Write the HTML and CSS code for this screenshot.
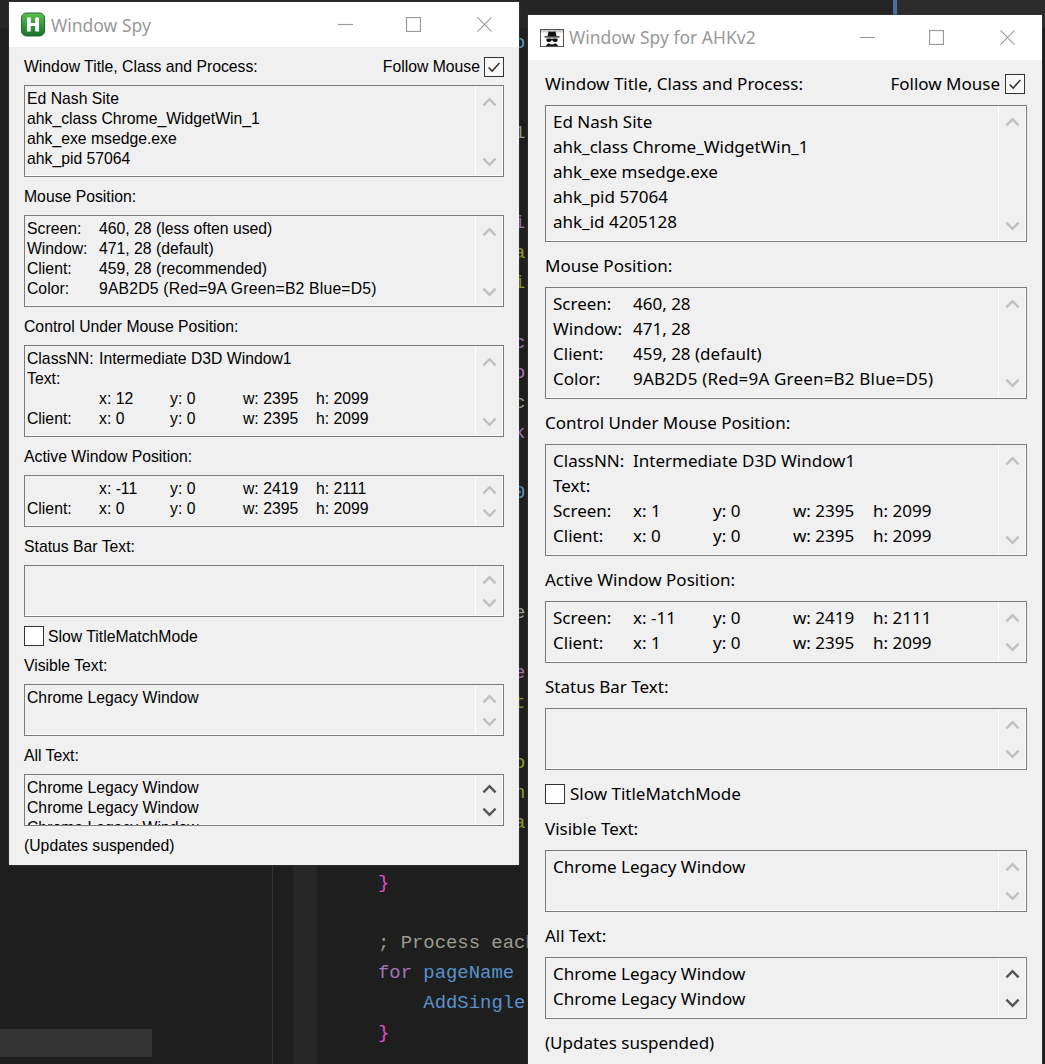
FILE: index.html
```html
<!DOCTYPE html>
<html lang="en">
<head>
<meta charset="UTF-8">
<meta name="viewport" content="width=device-width, initial-scale=1.0">
<title>Window Spy</title>
<link rel="stylesheet" href="styles.css">
</head>
<body>
    <svg class="defs" width="0" height="0">
        <symbol id="chev-up" viewBox="0 0 16 10"><path d="M1.500 8.500 8 2l6.500 6.500" fill="none" stroke="currentColor" stroke-width="2.600"/></symbol>
        <symbol id="chev-down" viewBox="0 0 16 10"><path d="M1.500 1.500 8 8l6.500-6.500" fill="none" stroke="currentColor" stroke-width="2.600"/></symbol>
        <symbol id="tick" viewBox="0 0 20 20"><path d="M4 10.500 8 14.500 16 5.500" fill="none" stroke="#333" stroke-width="1.700"/></symbol>
        <symbol id="min" viewBox="0 0 16 16"><path d="M0 8h16" stroke="#999" stroke-width="1.200"/></symbol>
        <symbol id="max" viewBox="0 0 16 16"><rect x=".6" y=".6" width="14.800" height="14.800" fill="none" stroke="#999" stroke-width="1.200"/></symbol>
        <symbol id="close" viewBox="0 0 16 16"><path d="M.5.5l15 15M15.500.5l-15 15" stroke="#999" stroke-width="1.100"/></symbol>
    </svg>

    <div class="tabs"><div class="tabs-left"></div><div class="tabs-accent"></div><div class="tabs-right"></div></div>

    <div class="editor">
        <div class="sidebar"><div class="sidebar-row"></div></div>
        <div class="gutter"></div>
        <div class="indent"></div>
<pre class="code">            <span class="fn">o</span>


            <span class="cmt">1</span><span class="fn">(</span>


            <span class="kw">i</span>
            <span class="str">a</span><span class="ok">,</span>
            <span class="str">i</span><span class="ok">(</span>

            <span class="kw">c</span>
            <span class="kw">o</span>
            <span class="cmt">c</span>
            <span class="kw">k</span>

            <span class="fn">0</span>



            <span class="cmt">e</span>

            <span class="kw">e</span>
            <span class="str">t</span><span class="ok">(</span>

            <span class="str">o</span>
            <span class="str">n</span>
            <span class="str">a</span><span class="ok">,</span>

<span class="br">}</span>

<span class="cmt">; Process each</span>
<span class="kw">for</span> <span class="fn">pageName</span>
    <span class="fn">AddSingle</span>
<span class="br">}</span></pre>
    </div>

    <!-- old spy -->
    <div class="window win-old">
        <div class="titlebar">
            <svg class="app-icon" viewBox="0 0 24 24">
                <defs><linearGradient id="green" x1="0" y1="0" x2="0" y2="1"><stop offset="0" stop-color="#5fbf4f"/><stop offset=".55" stop-color="#2f9a3c"/><stop offset="1" stop-color="#1a6e2c"/></linearGradient></defs>
                <rect x=".5" y=".5" width="23" height="23" rx="5" fill="url(#green)" stroke="#1f6b2a"/>
                <path d="M6 5h3.800v5.400h4.400V5H18v14h-3.800v-5.400H9.800V19H6z" fill="#fff"/>
            </svg>
            <span class="title">Window Spy</span>
            <div class="caption">
                <svg class="cap-btn"><use href="#min"/></svg>
                <svg class="cap-btn"><use href="#max"/></svg>
                <svg class="cap-btn"><use href="#close"/></svg>
            </div>
        </div>
        <div class="body">
            <div class="head-row">
                <span>Window Title, Class and Process:</span>
                <label class="check">Follow Mouse <span class="box-check"><svg><use href="#tick"/></svg></span></label>
            </div>
            <div class="box h-big">
                <div class="lines">
                    <div>Ed Nash Site</div>
                    <div>ahk_class Chrome_WidgetWin_1</div>
                    <div>ahk_exe msedge.exe</div>
                    <div>ahk_pid 57064</div>
                </div>
                <div class="scroll"><svg><use href="#chev-up"/></svg><svg><use href="#chev-down"/></svg></div>
            </div>

            <div class="label">Mouse Position:</div>
            <div class="box h-big">
                <div class="lines">
                    <div class="row"><span>Screen:</span><span class="wide">460, 28 (less often used)</span></div>
                    <div class="row"><span>Window:</span><span class="wide">471, 28 (default)</span></div>
                    <div class="row"><span>Client:</span><span class="wide">459, 28 (recommended)</span></div>
                    <div class="row"><span>Color:</span><span class="wide color">9AB2D5 (Red=9A Green=B2 Blue=D5)</span></div>
                </div>
                <div class="scroll"><svg><use href="#chev-up"/></svg><svg><use href="#chev-down"/></svg></div>
            </div>

            <div class="label">Control Under Mouse Position:</div>
            <div class="box h-big">
                <div class="lines">
                    <div class="row"><span>ClassNN:</span><span class="wide">Intermediate D3D Window1</span></div>
                    <div class="row"><span>Text:</span></div>
                    <div class="row"><span></span><span>x: 12</span><span>y: 0</span><span>w: 2395</span><span>h: 2099</span></div>
                    <div class="row"><span>Client:</span><span>x: 0</span><span>y: 0</span><span>w: 2395</span><span>h: 2099</span></div>
                </div>
                <div class="scroll"><svg><use href="#chev-up"/></svg><svg><use href="#chev-down"/></svg></div>
            </div>

            <div class="label">Active Window Position:</div>
            <div class="box h-small">
                <div class="lines">
                    <div class="row"><span></span><span>x: -11</span><span>y: 0</span><span>w: 2419</span><span>h: 2111</span></div>
                    <div class="row"><span>Client:</span><span>x: 0</span><span>y: 0</span><span>w: 2395</span><span>h: 2099</span></div>
                </div>
                <div class="scroll"><svg><use href="#chev-up"/></svg><svg><use href="#chev-down"/></svg></div>
            </div>

            <div class="label">Status Bar Text:</div>
            <div class="box h-small">
                <div class="lines"></div>
                <div class="scroll"><svg><use href="#chev-up"/></svg><svg><use href="#chev-down"/></svg></div>
            </div>

            <label class="check slow"><span class="box-check blank"></span> Slow TitleMatchMode</label>

            <div class="label">Visible Text:</div>
            <div class="box h-small">
                <div class="lines"><div>Chrome Legacy Window</div></div>
                <div class="scroll"><svg><use href="#chev-up"/></svg><svg><use href="#chev-down"/></svg></div>
            </div>

            <div class="label">All Text:</div>
            <div class="box h-small">
                <div class="lines">
                    <div>Chrome Legacy Window</div>
                    <div>Chrome Legacy Window</div>
                    <div>Chrome Legacy Window</div>
                </div>
                <div class="scroll active"><svg><use href="#chev-up"/></svg><svg><use href="#chev-down"/></svg></div>
            </div>

            <div class="label">(Updates suspended)</div>
        </div>
    </div>

    <!-- v2 spy -->
    <div class="window win-new">
        <div class="titlebar">
            <svg class="app-icon" viewBox="0 0 24 18">
                <rect x=".5" y=".5" width="23" height="17" fill="#fff" stroke="#555"/>
                <rect x="1" y="1" width="22" height="2.500" fill="#ccc"/>
                <path d="M8.500 2.500c1.300-.4 2.200.3 3.500.3s2.200-.7 3.500-.3l1 4.800h-9z" fill="#111"/>
                <path d="M4.500 7.300h15v1.200h-15z" fill="#111"/>
                <path d="M6.500 9.600h4.400c.5 0 .7.3 1.100.3s.6-.3 1.100-.3h4.400v1.800c0 1-1 1.700-2.300 1.700-1.200 0-2-.6-2.500-1.600h-1.400c-.5 1-1.300 1.600-2.500 1.600-1.300 0-2.300-.7-2.300-1.700z" fill="#111"/>
                <path d="M6 17c.5-1.600 1.600-2.400 3-2.800.9.8 1.900 1.200 3 1.200s2.100-.4 3-1.200c1.400.4 2.500 1.200 3 2.800z" fill="#111"/>
            </svg>
            <span class="title">Window Spy for AHKv2</span>
            <div class="caption">
                <svg class="cap-btn"><use href="#min"/></svg>
                <svg class="cap-btn"><use href="#max"/></svg>
                <svg class="cap-btn"><use href="#close"/></svg>
            </div>
        </div>
        <div class="body">
            <div class="head-row">
                <span>Window Title, Class and Process:</span>
                <label class="check">Follow Mouse <span class="box-check"><svg><use href="#tick"/></svg></span></label>
            </div>
            <div class="box h-title">
                <div class="lines">
                    <div>Ed Nash Site</div>
                    <div>ahk_class Chrome_WidgetWin_1</div>
                    <div>ahk_exe msedge.exe</div>
                    <div>ahk_pid 57064</div>
                    <div>ahk_id 4205128</div>
                </div>
                <div class="scroll"><svg><use href="#chev-up"/></svg><svg><use href="#chev-down"/></svg></div>
            </div>

            <div class="label">Mouse Position:</div>
            <div class="box h-big">
                <div class="lines">
                    <div class="row"><span>Screen:</span><span class="wide">460, 28</span></div>
                    <div class="row"><span>Window:</span><span class="wide">471, 28</span></div>
                    <div class="row"><span>Client:</span><span class="wide">459, 28 (default)</span></div>
                    <div class="row"><span>Color:</span><span class="wide color">9AB2D5 (Red=9A Green=B2 Blue=D5)</span></div>
                </div>
                <div class="scroll"><svg><use href="#chev-up"/></svg><svg><use href="#chev-down"/></svg></div>
            </div>

            <div class="label">Control Under Mouse Position:</div>
            <div class="box h-big">
                <div class="lines">
                    <div class="row"><span>ClassNN:</span><span class="wide">Intermediate D3D Window1</span></div>
                    <div class="row"><span>Text:</span></div>
                    <div class="row"><span>Screen:</span><span>x: 1</span><span>y: 0</span><span>w: 2395</span><span>h: 2099</span></div>
                    <div class="row"><span>Client:</span><span>x: 0</span><span>y: 0</span><span>w: 2395</span><span>h: 2099</span></div>
                </div>
                <div class="scroll"><svg><use href="#chev-up"/></svg><svg><use href="#chev-down"/></svg></div>
            </div>

            <div class="label">Active Window Position:</div>
            <div class="box h-small">
                <div class="lines">
                    <div class="row"><span>Screen:</span><span>x: -11</span><span>y: 0</span><span>w: 2419</span><span>h: 2111</span></div>
                    <div class="row"><span>Client:</span><span>x: 1</span><span>y: 0</span><span>w: 2395</span><span>h: 2099</span></div>
                </div>
                <div class="scroll"><svg><use href="#chev-up"/></svg><svg><use href="#chev-down"/></svg></div>
            </div>

            <div class="label">Status Bar Text:</div>
            <div class="box h-small">
                <div class="lines"></div>
                <div class="scroll"><svg><use href="#chev-up"/></svg><svg><use href="#chev-down"/></svg></div>
            </div>

            <label class="check slow"><span class="box-check blank"></span> Slow TitleMatchMode</label>

            <div class="label">Visible Text:</div>
            <div class="box h-small">
                <div class="lines"><div>Chrome Legacy Window</div></div>
                <div class="scroll"><svg><use href="#chev-up"/></svg><svg><use href="#chev-down"/></svg></div>
            </div>

            <div class="label">All Text:</div>
            <div class="box h-small">
                <div class="lines">
                    <div>Chrome Legacy Window</div>
                    <div>Chrome Legacy Window</div>
                </div>
                <div class="scroll active"><svg><use href="#chev-up"/></svg><svg><use href="#chev-down"/></svg></div>
            </div>

            <div class="label">(Updates suspended)</div>
        </div>
    </div>
</body>
</html>
```

FILE: styles.css
```css
html, body {
    margin: 0;
    padding: 0;
    height: 100%;
    overflow: hidden;
    background-color: #1e1e1e;
}

.defs {
    position: absolute;
}

/* editor behind the windows */
.tabs {
    display: flex;
    height: 28px;
}

.tabs-left {
    width: 893px;
    background-color: #252525;
}

.tabs-accent {
    width: 4px;
    background-color: #4a6f9a;
}

.tabs-right {
    flex: 1;
    background-color: #2b2b2b;
}

.editor {
    display: flex;
    height: 1036px;
}

.sidebar {
    width: 272px;
    border-right: 1px solid #333;
    display: flex;
    flex-direction: column;
    justify-content: flex-end;
}

.sidebar-row {
    width: 152px;
    height: 28px;
    margin-bottom: 7px;
    background-color: #333;
}

.gutter {
    width: 20px;
}

.indent {
    width: 24px;
    background-color: #262626;
}

.code {
    margin: 0;
    padding-left: 61px;
    font-family: "Liberation Mono", monospace;
    font-size: 18.9px;
    line-height: 30px;
    color: #9a9a8a;
    white-space: pre;
}

.fn { color: #5a92cc; }
.kw { color: #a275b5; }
.str { color: #8f9a2c; }
.ok { color: #3c7a3c; }
.cmt { color: #9c9c8e; }
.br { color: #e050c8; }

/* windows */
.window {
    position: absolute;
    display: flex;
    flex-direction: column;
    color: #000;
    background-color: #f0f0f0;
    box-shadow: 0 0 2px #444;
}

.titlebar {
    display: flex;
    align-items: center;
    background-color: #fff;
    flex-shrink: 0;
}

.title {
    color: #999;
    font-family: "Noto Sans", sans-serif;
    font-size: 17.5px;
}

.caption {
    margin-left: auto;
    display: flex;
}

.cap-btn {
    width: 15px;
    height: 15px;
    overflow: visible;
}

.body {
    display: flex;
    flex-direction: column;
    gap: 9px;
}

.head-row {
    display: flex;
    justify-content: space-between;
}

.check {
    display: flex;
}

.box-check {
    display: block;
    width: 18px;
    height: 18px;
    border: 1.4px solid #333;
    background-color: #f8f8f8;
}

.box-check svg {
    display: block;
    width: 100%;
    height: 100%;
}

.box-check.blank {
    background-color: #fff;
}

.box {
    display: flex;
    flex-shrink: 0;
    box-sizing: border-box;
    border: 1.4px solid #7a7a7a;
    box-shadow: inset -1px -1px 0 #fff;
    overflow: hidden;
}

.lines {
    flex: 1;
    overflow: hidden;
}

.row {
    display: grid;
}

.wide {
    grid-column: 2 / -1;
}

.color {
    letter-spacing: .18px;
}

.scroll {
    flex-shrink: 0;
    box-sizing: border-box;
    display: flex;
    flex-direction: column;
    justify-content: space-between;
    align-items: center;
    border-left: 1px solid #fff;
    color: #c0c0c0;
}

.scroll.active {
    color: #555;
}

.scroll svg {
    display: block;
}

/* AutoHotkey v1 spy */
.win-old {
    left: 9px;
    top: 2px;
    width: 510px;
    height: 863px;
    font-family: "Liberation Sans", Arial, sans-serif;
    font-size: 15.75px;
    line-height: 20px;
}

.win-old .titlebar {
    height: 45px;
    padding-left: 12px;
}

.win-old .app-icon {
    width: 24px;
    height: 25px;
    margin-right: 6px;
}

.win-old .caption {
    padding-right: 27px;
}

.win-old .cap-btn:nth-child(1) { margin-right: 53px; }
.win-old .cap-btn:nth-child(2) { margin-right: 56px; }

.win-old .body {
    padding: 9px 15px 0;
}

/* text sits a pixel low in its 20px row */
.win-old .label,
.win-old .head-row,
.win-old .check {
    height: 20px;
    line-height: 22px;
}

.win-old .check {
    gap: 4px;
}

.win-old .head-row .box-check {
    margin-top: 1px;
}

.win-old .h-big { height: 92px; }
.win-old .h-small { height: 52px; }

.win-old .lines {
    padding: 3px 0 0 2px;
}

.win-old .row {
    grid-template-columns: 72px 71px 73px 73px 1fr;
}

.win-old .scroll {
    width: 28px;
    padding: 11px 0 9px;
}

.win-old .h-small .scroll {
    padding: 9px 0 8px;
}

.win-old .scroll svg {
    width: 15px;
    height: 10px;
}

/* AHKv2 spy */
.win-new {
    left: 528px;
    top: 15px;
    width: 514px;
    height: 1060px;
    font-family: "Noto Sans", sans-serif;
    font-size: 17px;
    line-height: 25px;
}

.win-new .titlebar {
    height: 45px;
    padding-left: 12px;
}

.win-new .app-icon {
    width: 24px;
    height: 18px;
    margin-right: 5px;
}

.win-new .caption {
    padding-right: 27px;
}

.win-new .cap-btn:nth-child(1) { margin-right: 54px; }
.win-new .cap-btn:nth-child(2) { margin-right: 56px; }

.win-new .body {
    padding: 11px 15px 0 17px;
}

.win-new .label {
    margin-top: 2px;
}

.win-new .check {
    align-items: center;
    gap: 5px;
}

.win-new .head-row .box-check {
    margin-right: 2px;
}

.win-new .slow {
    margin: 2px 0 -1px;
}

.win-new .h-title { height: 137px; }
.win-new .h-big { height: 112px; }
.win-new .h-small { height: 62px; }

.win-new .lines {
    padding: 3px 0 0 7px;
}

.win-new .row {
    grid-template-columns: 80px 80px 80px 80px 1fr;
}

.win-new .scroll {
    width: 28px;
    padding: 11px 0 10px;
}

.win-new .scroll svg {
    width: 15px;
    height: 10px;
}
```
